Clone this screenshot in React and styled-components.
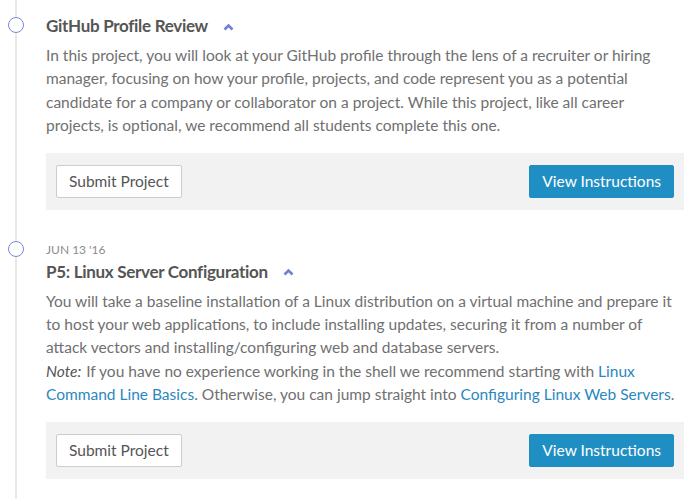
import React from 'react';
import styled, { createGlobalStyle } from 'styled-components';

const GlobalStyle = createGlobalStyle`
    html, body {
        margin: 0;
        padding: 0;
        background: #fff;
    }

    body {
        font-family: Lato, "Open Sans", sans-serif;
        -webkit-font-smoothing: antialiased;
    }
`;

const Timeline = styled.div`
    /* Box model */
    position: relative;
    width: 700px;
    height: 499px;
    overflow: hidden;
    padding: 13px 16px 0 46px;
    box-sizing: border-box;

    &::before {
        content: '';
        position: absolute;
        left: 15px;
        top: 0;
        bottom: 0;
        width: 2px;
        background: #e8e8e8;
    }
`;

const Item = styled.section`
    position: relative;
    margin-bottom: 31px;
`;

const Marker = styled.span`
    /* Box model */
    position: absolute;
    left: -38px;
    top: ${props => props.offset}px;
    width: 16px;
    height: 16px;
    box-sizing: border-box;

    /* Visual */
    border: 1.5px solid #7a87e0;
    border-radius: 50%;
    background: #fff;
`;

const Date = styled.div`
    font-size: 12px;
    line-height: 18px;
    color: #8c8c8c;
    text-transform: uppercase;
`;

const Title = styled.h3`
    /* Box model */
    display: flex;
    align-items: center;
    gap: 15px;
    margin: 0;

    /* Typo */
    font-size: 17px;
    line-height: 26px;
    font-weight: 700;
    letter-spacing: -.3px;
    color: #555;
`;

const Caret = styled.svg`
    width: 11px;
    height: 8px;
    margin-top: 1px;
`;

const Body = styled.p`
    margin: 5px 0 0;
    font-size: 15.5px;
    line-height: 23.4px;
    color: #707070;
`;

const Note = styled.em`
    color: #555;
    margin-right: 1px;
`;

const Link = styled.a`
    color: #2b88bf;
    text-decoration: none;
`;

const Actions = styled.div`
    /* Box model */
    display: flex;
    justify-content: space-between;
    align-items: center;
    margin-top: 15px;
    padding: 12px 10px;

    /* Visual */
    background: #f2f2f2;
`;

const Button = styled.button`
    /* Box model */
    height: 33px;
    padding: 0 12px;

    /* Typo */
    font-family: inherit;
    font-size: 15.5px;
    color: ${props => props.primary ? '#fff' : '#555'};

    /* Visual */
    background: ${props => props.primary ? '#1f8fc3' : '#fff'};
    border: 1px solid ${props => props.primary ? '#1f8fc3' : '#ccc'};
    border-radius: 2px;
    cursor: pointer;
`;

const ChevronUp = () => (
    <Caret viewBox="0 0 11 8">
        <polyline points="1.5,6.5 5.5,2.5 9.5,6.5" fill="none" stroke="#6d7fd9" strokeWidth="2.6" />
    </Caret>
);

const Project = ({ date, title, children, markerOffset }) => (
    <Item>
        <Marker offset={markerOffset} />
        {date && <Date>{date}</Date>}
        <Title>
            {title}
            <ChevronUp />
        </Title>
        <Body>{children}</Body>
        <Actions>
            <Button>Submit Project</Button>
            <Button primary>View Instructions</Button>
        </Actions>
    </Item>
);

export default function App() {
    return (
        <>
            <GlobalStyle />
            <Timeline>
                <Project title="GitHub Profile Review" markerOffset={4}>
                    In this project, you will look at your GitHub profile through the lens of a recruiter or hiring
                    manager, focusing on how your profile, projects, and code represent you as a potential
                    candidate for a company or collaborator on a project. While this project, like all career
                    projects, is optional, we recommend all students complete this one.
                </Project>
                <Project date="Jun 13 '16" title="P5: Linux Server Configuration" markerOffset={0}>
                    You will take a baseline installation of a Linux distribution on a virtual machine and prepare it
                    to host your web applications, to include installing updates, securing it from a number of
                    attack vectors and installing/configuring web and database servers.
                    <br />
                    <Note>Note:</Note> If you have no experience working in the shell we recommend starting with{' '}
                    <Link href="#">Linux Command Line Basics</Link>. Otherwise, you can jump straight into{' '}
                    <Link href="#">Configuring Linux Web Servers</Link>.
                </Project>
            </Timeline>
        </>
    );
}
